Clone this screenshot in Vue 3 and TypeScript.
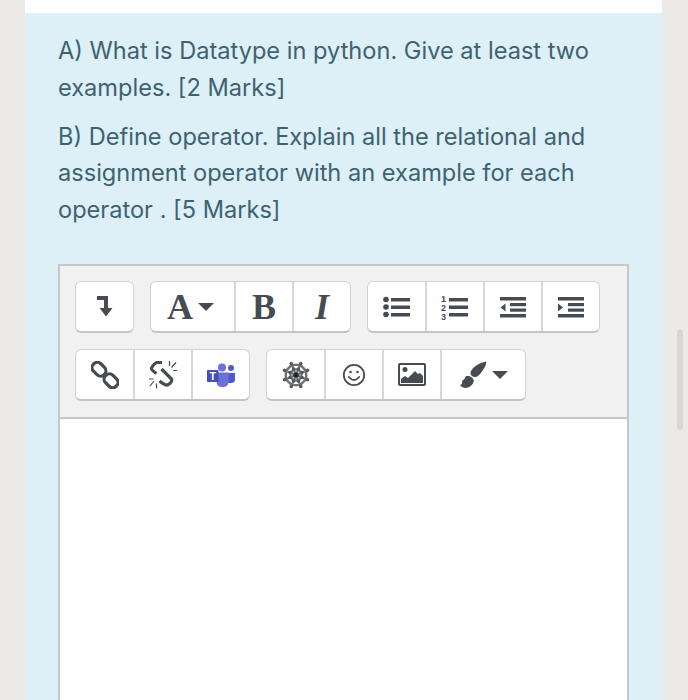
<script setup lang="ts">
interface Pt { x: number; y: number }
const polar = (r: number, deg: number): Pt => {
  const a = (deg * Math.PI) / 180;
  return { x: 14 + Math.cos(a) * r, y: 14 + Math.sin(a) * r };
};
const angles = [0, 45, 90, 135, 180, 225, 270, 315].map((a) => a + 22.5);
const ringPath = (r: number): string => angles.map((a) => `${polar(r, a).x},${polar(r, a).y}`).join(" ");
const webDots: Pt[] = [6.5, 12.5].flatMap((r) => angles.map((a) => polar(r, a)));
const spokes = angles.map((a) => polar(12.5, a));
const outerRing = ringPath(11);
const innerRing = ringPath(6);
</script>

<template>
  <div class="page">
    <main class="sheet">
      <div class="white-top"></div>
      <section class="question">
        <p>A) What is Datatype in python. Give at least two examples. [2 Marks]</p>
        <p>B) Define operator. Explain all the relational and assignment operator with an example for each operator . [5 Marks]</p>
        <div class="editor">
          <div class="toolbar">
            <div class="row">
              <div class="group">
                <button class="btn w58">
                  <svg width="16" height="21" viewBox="0 0 16 21"><path d="M0 0H11V12H15.500L9 20.500 2.500 12H7V4H0z" fill="#474b52"/></svg>
                </button>
              </div>
              <div class="group">
                <button class="btn w83 serif"><span>A</span><i class="caret"></i></button>
                <button class="btn w58 serif">B</button>
                <button class="btn w58 serif italic">I</button>
              </div>
              <div class="group">
                <button class="btn w58">
                  <svg width="28" height="22" viewBox="0 0 28 22" fill="#474b52"><circle cx="3" cy="3.500" r="2.800"/><circle cx="3" cy="11" r="2.800"/><circle cx="3" cy="18.500" r="2.800"/><rect x="8" y="2" width="19" height="3.500"/><rect x="8" y="9.500" width="19" height="3.500"/><rect x="8" y="17" width="19" height="3.500"/></svg>
                </button>
                <button class="btn w58">
                  <svg width="28" height="26" viewBox="0 0 28 26" fill="#474b52"><text x="0" y="7.500" class="num">1</text><text x="0" y="16.500" class="num">2</text><text x="0" y="25.500" class="num">3</text><rect x="8" y="4" width="19" height="3.500"/><rect x="8" y="11.500" width="19" height="3.500"/><rect x="8" y="19" width="19" height="3.500"/></svg>
                </button>
                <button class="btn w58">
                  <svg width="28" height="22" viewBox="0 0 28 22" fill="#474b52"><rect x="1" y="1" width="26" height="3.500"/><rect x="11" y="7" width="16" height="3.200"/><rect x="11" y="12.500" width="16" height="3.200"/><rect x="1" y="18" width="26" height="3.500"/><path d="M6.500 7.500v8L1.500 11.500z"/></svg>
                </button>
                <button class="btn w58">
                  <svg width="28" height="22" viewBox="0 0 28 22" fill="#474b52"><rect x="1" y="1" width="26" height="3.500"/><rect x="11" y="7" width="16" height="3.200"/><rect x="11" y="12.500" width="16" height="3.200"/><rect x="1" y="18" width="26" height="3.500"/><path d="M1 7.500v8l5-4z"/></svg>
                </button>
              </div>
            </div>
            <div class="row">
              <div class="group">
                <button class="btn w58">
                  <svg width="28" height="28" viewBox="0 0 28 28" fill="none" stroke="#474b52" stroke-width="3.200"><rect x="0.500" y="3" width="15" height="10.500" rx="5" transform="rotate(45 8 8.200)"/><rect x="12.500" y="14.500" width="15" height="10.500" rx="5" transform="rotate(45 20 19.800)"/></svg>
                </button>
                <button class="btn w58">
                  <svg width="28" height="28" viewBox="0 0 28 28" fill="none" stroke="#474b52"><path d="M13 1.500H8Q5.500 2 2.500 7 2 9 7.500 12.500" stroke-width="3.200"/><path d="M12.500 8L22.500 18Q24 21 18.500 24 16 24.500 10.500 20" stroke-width="3.200"/><path d="M20.500 0v5M27 1.500 22.500 6.500M28 9.500h-4M0 18h4.500M1 25l4-5M7.500 27.500v-5" stroke-width="1.200"/></svg>
                </button>
                <button class="btn w58">
                  <svg width="28" height="24" viewBox="0 0 28 24"><circle cx="15" cy="4.500" r="4" fill="#6b70d8"/><circle cx="24" cy="5" r="3" fill="#5059c9"/><path d="M20 10h8v6.500q0 3.500-4 3.500h-4z" fill="#5059c9"/><path d="M9 9.500h12.500v9q0 5.500-6 5.500t-6-5.500z" fill="#6b70d8"/><rect x="0" y="7" width="11.500" height="12" rx="1" fill="#464eb8"/><text x="5.700" y="16.800" class="teams-t">T</text></svg>
                </button>
              </div>
              <div class="group">
                <button class="btn w58">
                  <svg width="28" height="28" viewBox="0 0 28 28" fill="none" stroke="#6f7175">
                    <polygon :points="outerRing" stroke-width="2.400"/>
                    <polygon :points="innerRing" stroke-width="2.200"/>
                    <line v-for="(s, i) in spokes" :key="'s' + i" x1="14" y1="14" :x2="s.x" :y2="s.y" stroke-width="2.200"/>
                    <circle v-for="(d, i) in webDots" :key="i" :cx="d.x" :cy="d.y" r="1.700" fill="#55575b" stroke="none"/>
                    <circle cx="14" cy="14" r="2.600" fill="#26282c" stroke="none"/>
                  </svg>
                </button>
                <button class="btn w58">
                  <svg width="24" height="24" viewBox="0 0 24 24" fill="none" stroke="#474b52" stroke-width="1.800"><circle cx="12" cy="12" r="10.200"/><path d="M6.800 14q5.200 6 10.400 0" stroke-linecap="round"/><circle cx="8.500" cy="9" r="1.300" fill="#474b52" stroke="none"/><circle cx="15.500" cy="9" r="1.300" fill="#474b52" stroke="none"/></svg>
                </button>
                <button class="btn w58">
                  <svg width="28" height="24" viewBox="0 0 28 24"><rect x="1" y="1" width="26" height="21" rx="1" fill="#fff" stroke="#474b52" stroke-width="2"/><circle cx="7" cy="6.500" r="2.500" fill="#474b52"/><path d="M3 20v-4l4-3 3 2 7-7 3 3 2-1 3 3v7z" fill="#474b52"/></svg>
                </button>
                <button class="btn w85">
                  <svg width="28" height="27" viewBox="0 0 28 27" fill="#474b52"><path d="M27 .5Q28 3 24 9 19 17 15 16 10 14 12 10 16 3 27 .5z"/><path d="M10 15Q14 16 15 20 13 26 7 27 3 27 1 24 4 23 3 20 6 18 7 15z"/></svg>
                  <i class="caret"></i>
                </button>
              </div>
            </div>
          </div>
          <div class="content"></div>
        </div>
      </section>
    </main>
    <div class="scroll-thumb"></div>
  </div>
</template>

<style scoped>
.page {
  position: relative;
  box-sizing: border-box;
  height: 700px;
  padding: 0 26px 0 25px;
  overflow: hidden;
  background: #ebeae6;
  font-family: Inter, "Liberation Sans", sans-serif;
}
.sheet {
  height: 700px;
  display: flex;
  flex-direction: column;
}
.white-top {
  height: 13px;
  flex: none;
  background: #fff;
}
.question {
  flex: 1;
  box-sizing: border-box;
  padding: 20px 33px 0 33px;
  background: #ddf0f8;
  min-height: 0;
}
p {
  margin: 0 0 12.500px;
  font-size: 23.600px;
  line-height: 36.500px;
  color: #3f6270;
}
.editor {
  margin: 36px 0 0;
  height: 500px;
  border: 2px solid #c6c8c9;
  box-sizing: border-box;
  width: 571px;
  background: #fff;
}
.toolbar {
  box-sizing: border-box;
  height: 153px;
  padding: 15px 15px 0;
  background: #f1f1f1;
  border-bottom: 2px solid #c6c6c6;
  display: flex;
  flex-direction: column;
  gap: 16px;
}
.row {
  display: flex;
  gap: 16px;
}
.group {
  display: flex;
  height: 52px;
  box-sizing: border-box;
  background: #fff;
  border: 1px solid #d2d2d2;
  border-bottom: 2px solid #c4c4c4;
  border-radius: 6px;
}
.btn {
  box-sizing: border-box;
  height: 100%;
  padding: 0;
  display: flex;
  align-items: center;
  justify-content: center;
  gap: 5px;
  background: transparent;
  border: 0;
  border-left: 2px solid #d8d8d8;
  color: #474b52;
}
.btn:first-child {
  border-left: 0;
}
.w58 {
  width: 58px;
}
.btn:first-child.w58 {
  width: 57px;
}
.w83 {
  width: 83px;
  padding-right: 4px;
}
.w85 {
  width: 85px;
}
.serif {
  font-family: "Liberation Serif", serif;
  font-size: 36px;
  font-weight: 700;
}
.italic {
  font-style: italic;
}
.caret {
  width: 0;
  height: 0;
  border-left: 8px solid transparent;
  border-right: 8px solid transparent;
  border-top: 8px solid #474b52;
}
.content {
  height: 340px;
  background: #fff;
}
.num {
  font-family: "Liberation Sans", sans-serif;
  font-size: 9px;
  font-weight: 700;
}
.teams-t {
  font-family: "Liberation Sans", sans-serif;
  font-size: 10.500px;
  font-weight: 700;
  fill: #fff;
  text-anchor: middle;
}
.scroll-thumb {
  position: absolute;
  left: 677px;
  top: 329px;
  width: 6px;
  height: 101px;
  border-radius: 3px;
  background: #d6d6d4;
}
</style>
